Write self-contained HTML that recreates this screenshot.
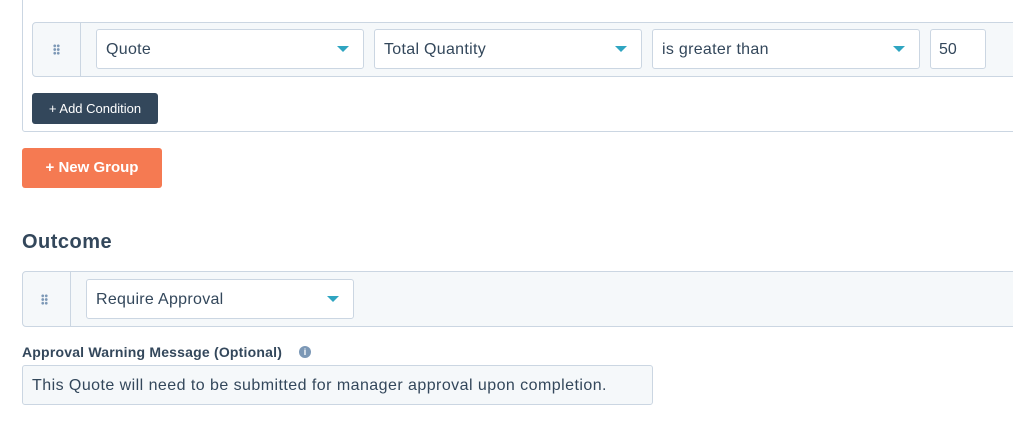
<!DOCTYPE html>
<html><head><style>
body{margin:0;width:1013px;height:436px;background:#fff;font-family:"Liberation Sans",sans-serif;color:#33475b;position:relative;overflow:hidden}
.a{position:absolute;box-sizing:border-box}
.row{background:#f5f8fa;border:1px solid #cbd6e2;border-radius:4px}
.sel{background:#fff;border:1px solid #cbd6e2;border-radius:3px;font-size:16px;padding-left:9px;line-height:40px;color:#33475b;letter-spacing:0.3px}
.sel:after{content:"";position:absolute;right:14px;top:16px;border-left:6px solid transparent;border-right:6px solid transparent;border-top:6px solid #2fa5c1}
.dots{position:absolute;width:7px;height:11px;background:radial-gradient(circle,#7c98b6 1.2px,transparent 1.6px) 0 0/3.5px 3.7px}
</style></head><body>
<div class="a" style="left:22px;top:-5px;width:1000px;height:137px;border:1px solid #cbd6e2;border-radius:3px"></div>
<div class="a" style="left:40px;top:-10px;font-size:11px;color:#0091ae;font-weight:bold">AND</div>
<div class="a row" style="left:32px;top:22px;width:990px;height:55px">
 <div class="a" style="left:47px;top:0;height:53px;border-left:1px solid #cbd6e2"></div>
 <div class="dots" style="left:20px;top:21px"></div>
</div>
<div class="a sel" style="left:96px;top:29px;width:268px;height:40px">Quote</div>
<div class="a sel" style="left:374px;top:29px;width:268px;height:40px">Total Quantity</div>
<div class="a sel" style="left:652px;top:29px;width:268px;height:40px">is greater than</div>
<div class="a" style="left:930px;top:29px;width:56px;height:40px;background:#fff;border:1px solid #cbd6e2;border-radius:3px;font-size:16px;line-height:40px;padding-left:8px">50</div>
<div class="a" style="left:32px;top:93px;width:126px;height:31px;background:#33475b;border-radius:3px;color:#fff;font-size:13px;line-height:31px;text-align:center">+ Add Condition</div>
<div class="a" style="left:22px;top:148px;width:140px;height:40px;background:#f57a52;border-radius:3px;color:#fff;font-size:15px;font-weight:bold;line-height:40px;text-align:center">+ New Group</div>
<div class="a" style="left:22px;top:231px;font-size:20px;font-weight:bold;letter-spacing:0.5px">Outcome</div>
<div class="a row" style="left:22px;top:271px;width:1000px;height:56px">
 <div class="a" style="left:47px;top:0;height:54px;border-left:1px solid #cbd6e2"></div>
 <div class="dots" style="left:18px;top:22px"></div>
</div>
<div class="a sel" style="left:86px;top:279px;width:268px;height:40px">Require Approval</div>
<div class="a" style="left:22px;top:344px;font-size:14px;font-weight:bold;letter-spacing:0.2px">Approval Warning Message (Optional)</div>
<div class="a" style="left:299px;top:346px;width:12px;height:12px;border-radius:50%;background:#7c98b6;color:#fff;font-size:9px;font-weight:bold;text-align:center;line-height:12px">i</div>
<div class="a" style="left:22px;top:365px;width:631px;height:40px;background:#f5f8fa;border:1px solid #cbd6e2;border-radius:3px;font-size:16px;line-height:40px;padding-left:9px;letter-spacing:0.45px">This Quote will need to be submitted for manager approval upon completion.</div>
</body></html>
